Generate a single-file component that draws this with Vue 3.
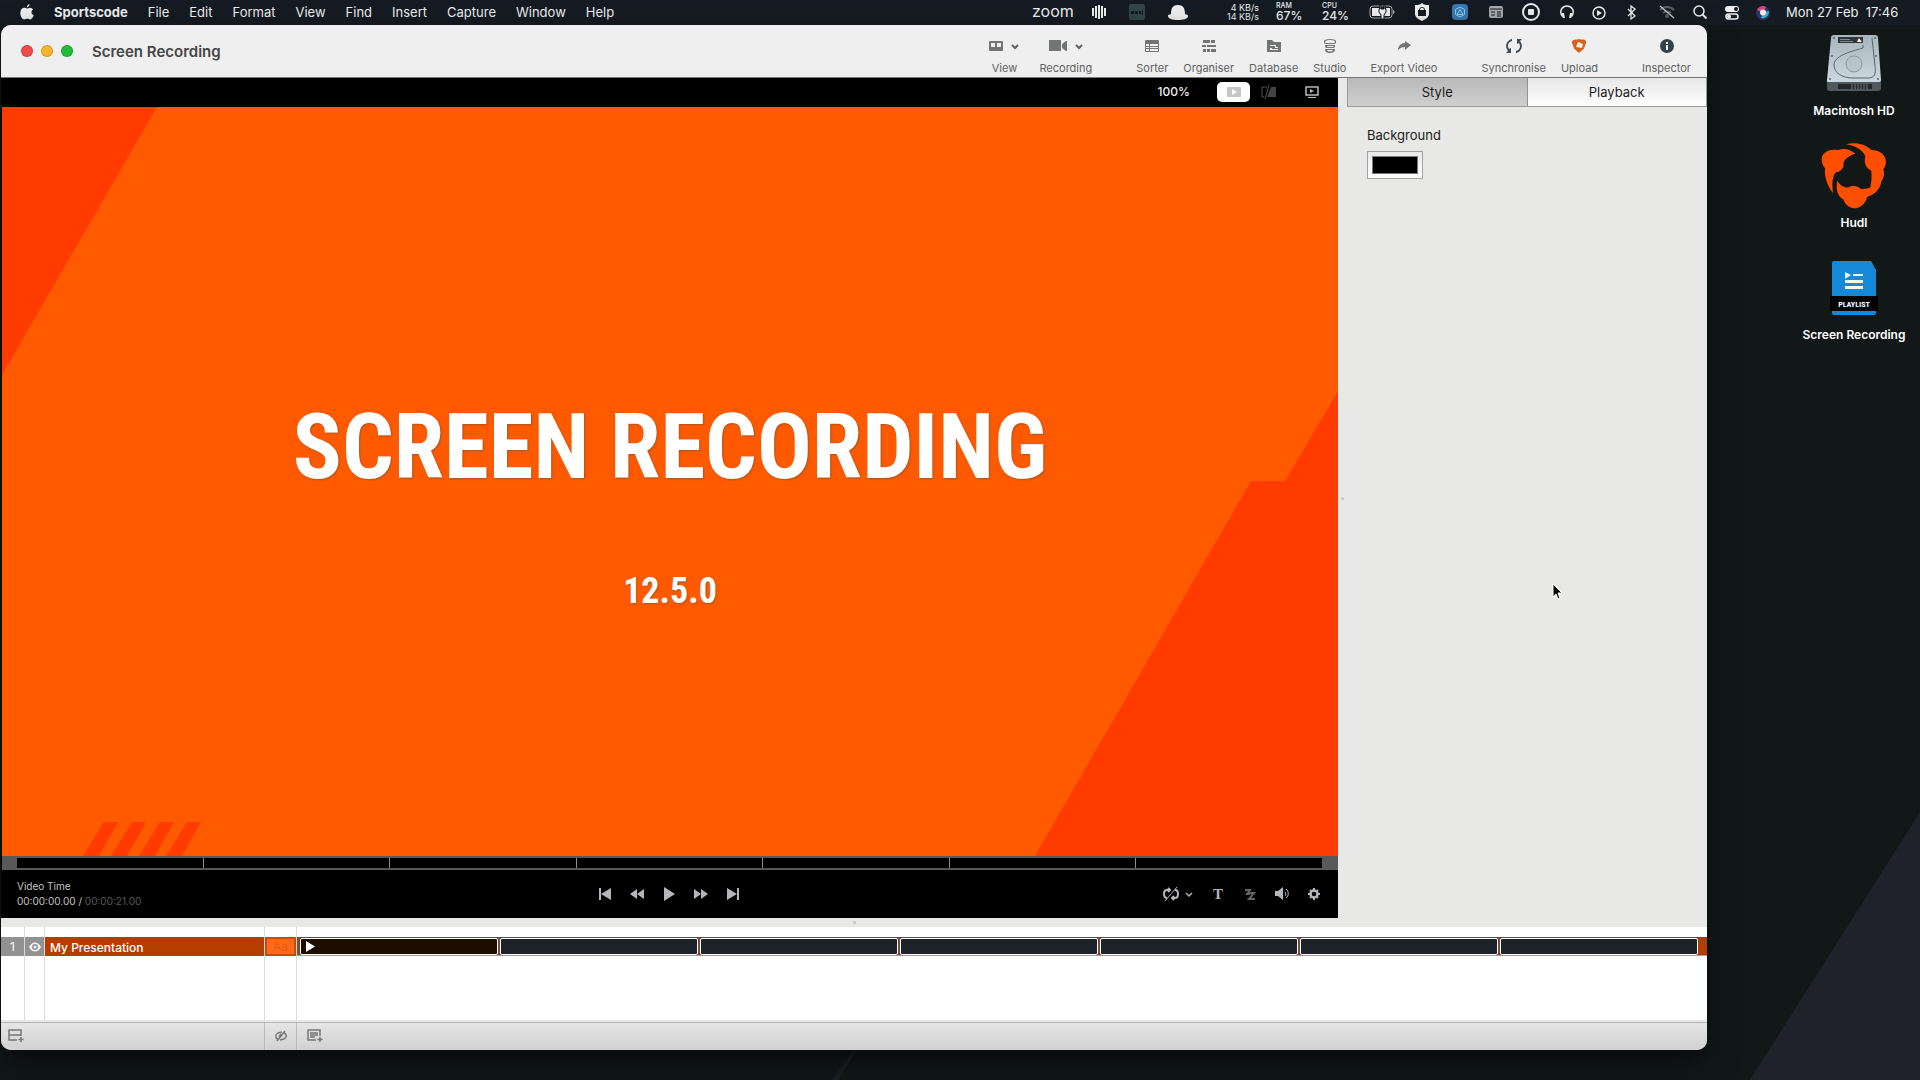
<template>
  <div class="desktop">
    <svg class="wallpaper" viewBox="0 0 1920 1080" preserveAspectRatio="none" aria-hidden="true">
      <path d="M1920 812 1750 1080H1920Z" fill="#1f222a" />
      <path d="M853 1050 832 1080H838L857 1050Z" fill="#1d1f26" />
    </svg>

    <header class="menubar">
      <nav class="menus" aria-label="Menu bar">
        <button class="menu apple" aria-label="Apple menu">
          <svg width="14" height="16" viewBox="0 0 14 16">
            <path fill="currentColor" d="M9.6 0c.1 1.600-1.100 3.300-2.800 3.500C6.700 2 8 .3 9.600 0ZM6.900 4.500c.7 0 1.600-.8 3-.8 1.300 0 2.500.7 3.200 1.800-2.400 1.400-2 4.800.6 5.800-.7 2-2 4.200-3.500 4.200-1.200 0-1.600-.7-3-.7s-1.900.7-3 .7C2.400 15.500.3 12.200.3 9 .3 5.700 2.300 3.800 4.300 3.800c1.200 0 2 .7 2.600.7Z" />
          </svg>
        </button>
        <button v-for="(menu, index) in menus" :key="menu" class="menu" :class="{ bold: index === 0 }">
          {{ menu }}
        </button>
      </nav>

      <div class="status">
        <span class="zoom">zoom</span>
        <svg width="14" height="20" viewBox="0 0 14 20"><path stroke="currentColor" stroke-width="2" d="M1 6v8M4 4v12M7 3v14M10 4v12M13 6v8" /></svg>
        <svg width="30" height="20" viewBox="0 0 30 20"><rect x="7" y="2" width="16" height="16" rx="2" fill="#36434a" /><path fill="#10181c" d="M9 9h3v3H9zM13 9h3v3h-3zM17 9h2v3h-2zM20 8h1v5h-1z" /></svg>
        <svg width="20" height="20" viewBox="0 0 20 20"><path fill="currentColor" d="M3 12C3 6 5 3 10 3s7 3 7 9c1 1 3 0 3 2 0 3-5 4-10 4S0 17 0 14c0-2 2-1 3-2Z" /></svg>
        <span class="net">4 KB/s<br>14 KB/s</span>
        <span class="meter ram"><small>RAM</small>67%</span>
        <span class="meter cpu"><small>CPU</small>24%</span>
        <svg width="28" height="20" viewBox="0 0 28 20">
          <rect x="2" y="4" width="22" height="12" rx="3" fill="none" stroke="#a5a9ab" />
          <path fill="currentColor" d="M4 6h7v3l1 3 2 2H4zM16 6h6v8h-7l2-2 1-3V6z" />
          <path fill="currentColor" stroke="#151b22" d="M12 3h1v4h3V3h1v4h1v3l-2 3v4h-3v-4l-2-3V7h1z" />
          <path fill="#a5a9ab" d="M25 8c2 0 2 4 0 4z" />
        </svg>
        <svg width="20" height="20" viewBox="0 0 20 20"><path fill="currentColor" fill-rule="evenodd" d="M10 1c2 2 4 2 7 2v9c0 3-3 5-7 7-4-2-7-4-7-7V3c3 0 5 0 7-2ZM7 8H6v6h8V8h-1C13 4 7 4 7 8Zm1 0c0-3 4-3 4 0Z" /></svg>
        <svg width="24" height="20" viewBox="0 0 24 20"><rect x="4" y="2" width="16" height="16" rx="4" fill="#3679ae" /><path fill="none" stroke="#8cc7f3" d="M12 5 16.500 7.500v5L12 15l-4.500-2.500v-5ZM12 7.500l-3 5h6Z" /></svg>
        <svg width="16" height="20" viewBox="0 0 16 20"><rect x="1" y="4" width="14" height="12" rx="2" fill="#a6a9ac" /><path stroke="#1a2026" d="M2 7h12M3 10h4M3 13h4M9 10h4M9 12h4M9 14h4" /></svg>
        <svg width="24" height="20" viewBox="0 0 24 20"><circle cx="11" cy="10" r="8" fill="none" stroke="currentColor" stroke-width="2" /><rect x="8" y="7" width="6" height="6" rx="1" fill="currentColor" /></svg>
        <svg width="16" height="20" viewBox="0 0 16 20"><path fill="none" stroke="currentColor" stroke-width="1.500" d="M2 14C-1 9 2 4 7 4s8 5 5 10" /><path fill="currentColor" d="M2 11h2l1 5H3l-2-3ZM12 11h-2l-1 5h2l2-3Z" /></svg>
        <svg width="14" height="20" viewBox="0 0 14 20"><circle cx="7" cy="11" r="6" fill="none" stroke="currentColor" stroke-width="1.500" /><path fill="currentColor" d="m5 8 5 3-5 3Z" /></svg>
        <svg width="20" height="20" viewBox="0 0 20 20"><path fill="none" stroke="currentColor" stroke-width="1.300" d="m6 7 7 7-4 3V4l4 3-7 7" /></svg>
        <svg width="18" height="20" viewBox="0 0 18 20"><path fill="none" stroke="#596066" stroke-width="2" d="M2 8c4-4 10-4 14 0M5 11c2-2 6-2 8 0" /><circle cx="9" cy="14" r="2" fill="#596066" /><path stroke="#c6c9cb" stroke-width="1.300" d="m2 4 14 12" /></svg>
        <svg width="16" height="20" viewBox="0 0 16 20"><circle cx="7" cy="9" r="5" fill="none" stroke="currentColor" stroke-width="1.500" /><path stroke="currentColor" stroke-width="2" d="m10.500 12.500 4 4" /></svg>
        <svg width="16" height="20" viewBox="0 0 16 20"><rect x="1" y="4" width="14" height="6" rx="3" fill="currentColor" /><circle cx="12" cy="7" r="2" fill="#12191c" /><rect x="2" y="12" width="12" height="5" rx="2.500" fill="none" stroke="currentColor" stroke-width="1.500" /><circle cx="5" cy="14.500" r="2" fill="currentColor" /></svg>
        <svg width="14" height="20" viewBox="0 0 14 20"><circle cx="7" cy="11" r="7" fill="#2b3265" /><path fill="#d84478" d="M1 8c2-4 7-5 9-3L7 11Z" /><path fill="#36b0c5" d="M13 9c0 6-5 8-8 7l2-6Z" /><circle cx="7" cy="10.500" r="3" fill="#f1eaf5" /></svg>
        <time class="clock">Mon 27 Feb&nbsp; 17:46</time>
      </div>
    </header>

    <div class="workspace">
      <main class="window">
        <div class="titlebar">
          <div class="lights">
            <button class="light red" aria-label="Close"></button>
            <button class="light amber" aria-label="Minimise"></button>
            <button class="light green" aria-label="Zoom"></button>
          </div>
          <h1 class="window-title">Screen Recording</h1>
          <div class="toolbar">
            <div v-for="(group, index) in toolGroups" :key="index" class="tool-group">
              <button v-for="tool in group" :key="tool.label" class="tool">
                <span class="tool-icon">
                  <svg :width="tool.width || 16" height="16" :viewBox="`0 0 ${tool.width || 16} 16`">
                    <path :fill="tool.color || '#737575'" fill-rule="evenodd" :d="tool.path" />
                  </svg>
                  <svg v-if="tool.menu" width="8" height="16" viewBox="0 0 8 16"><path fill="none" stroke="#626464" stroke-width="2" d="m1 7 3 3 3-3" /></svg>
                </span>
                {{ tool.label }}
              </button>
            </div>
          </div>
        </div>

        <div class="content">
          <section class="player">
            <div class="view-bar">
              <span class="scale">100%</span>
              <button class="view-button active" aria-label="Presentation view">
                <svg width="14" height="10" viewBox="0 0 14 10"><rect width="14" height="10" rx="1" fill="#c6c6c6" /><path fill="#fff" d="m5 2 5 3-5 3Z" /></svg>
              </button>
              <button class="view-button" aria-label="Hide drawings">
                <svg width="16" height="14" viewBox="0 0 16 14"><path fill="#444" d="M10 2h5v10H6Z" /><path fill="none" stroke="#555" d="M6 2H1v10h2M8 0 4 14" /></svg>
              </button>
              <button class="view-button" aria-label="Presenter display">
                <svg width="14" height="12" viewBox="0 0 14 12"><rect x="1" y="1" width="12" height="8" fill="none" stroke="#bbb" stroke-width="1.500" /><path fill="#bbb" d="m5 3 4 2-4 2ZM3 11h8v1H3Z" /></svg>
              </button>
            </div>

            <div class="slide">
              <svg class="slide-art" viewBox="0 0 1336 749" aria-hidden="true">
                <rect width="1336" height="749" fill="#ff5a00" />
                <path fill="#ff3b00" d="M0 0H155L0 268ZM1336 284 1283 374H1249L1033 749H1336ZM102 715h14l-19 34H81ZM130 715h14l-19 34h-16ZM158 715h14l-19 34h-16ZM185 715h14l-19 34h-16Z" />
              </svg>
              <div class="slide-text">
                <h2 class="slide-title">SCREEN RECORDING</h2>
                <p class="slide-version">12.5.0</p>
              </div>
            </div>

            <div class="scrubber">
              <span v-for="n in 7" :key="n" class="scrub-part"></span>
            </div>

            <div class="controls">
              <div class="time">
                <div>Video Time</div>
                <div>00:00:00.00 / <span class="total">00:00:21.00</span></div>
              </div>
              <div class="transport">
                <button v-for="control in transport" :key="control.label" :aria-label="control.label">
                  <svg width="14" height="14" viewBox="0 0 14 14"><path fill="#b4b7ba" :d="control.path" /></svg>
                </button>
              </div>
              <div class="options">
                <button class="loop" aria-label="Loop options">
                  <svg width="16" height="14" viewBox="0 0 16 14"><path fill="none" stroke="#b4b7ba" stroke-width="2" d="M4 11C0 11 0 3 4 3h3M5 1l2 2-2 2M12 3c4 0 4 8 0 8H9M11 9l-2 2 2 2" /><path stroke="#b4b7ba" d="M14 0 2 14" /></svg>
                  <svg width="8" height="14" viewBox="0 0 8 14"><path fill="none" stroke="#b4b7ba" stroke-width="1.500" d="m1 6 3 3 3-3" /></svg>
                </button>
                <button class="text-tool" aria-label="Text">T</button>
                <button aria-label="Transition">
                  <svg width="14" height="14" viewBox="0 0 14 14"><path fill="none" stroke="#626466" stroke-width="2" d="M2 3h5L4 7h3M6 6h5l-5 6h6" /></svg>
                </button>
                <button aria-label="Volume">
                  <svg width="14" height="14" viewBox="0 0 14 14"><path fill="#b4b7ba" d="M0 4h3l5-4v13L3 9H0Z" /><path fill="none" stroke="#b4b7ba" d="M10 5c1 1 1 3 0 4M11 2c3 2 3 7 0 9" /></svg>
                </button>
                <button aria-label="Settings">
                  <svg width="14" height="14" viewBox="0 0 14 14"><circle cx="7" cy="7" r="3.500" fill="none" stroke="#b4b7ba" stroke-width="2.500" /><path stroke="#b4b7ba" stroke-width="2" d="M7 1v2M7 11v2M1 7h2M11 7h2M3 3l1 1M10 10l1 1M11 3l-1 1M4 10l-1 1" /></svg>
                </button>
              </div>
            </div>
          </section>

          <div class="splitter"><span class="grip"></span></div>

          <aside class="inspector">
            <div class="tabs" role="tablist">
              <button
                v-for="tab in tabs"
                :key="tab"
                class="tab"
                :class="{ selected: tab === activeTab }"
                role="tab"
                :aria-selected="tab === activeTab"
                @click="activeTab = tab"
              >
                {{ tab }}
              </button>
            </div>
            <div class="field">
              <label for="background">Background</label>
              <input id="background" v-model="background" type="color" class="swatch">
            </div>
          </aside>
        </div>

        <div class="row-splitter"><span class="grip"></span></div>

        <section class="timeline">
          <div class="column"><span class="row-number">1</span></div>
          <div class="column">
            <button class="row-eye" aria-label="Toggle row">
              <svg width="12" height="10" viewBox="0 0 12 10"><path fill="#f4f4f4" fill-rule="evenodd" d="M0 5c3-6 9-6 12 0-3 6-9 6-12 0Zm6-3a3 3 0 1 0 0 6 3 3 0 0 0 0-6Z" /><circle cx="6" cy="5" r="1.500" fill="#f4f4f4" /></svg>
            </button>
          </div>
          <div class="column"><span class="row-name">My Presentation</span></div>
          <div class="column"><span class="row-label">Aa</span></div>
          <div class="column">
            <div class="clips">
              <button v-for="n in 7" :key="n" class="clip" :class="{ current: n === 1 }" :aria-label="`Clip ${n}`">
                <svg v-if="n === 1" width="9" height="11" viewBox="0 0 9 11"><path fill="#fff" d="m0 0 9 5.500L0 11Z" /></svg>
              </button>
            </div>
          </div>
        </section>

        <footer class="bottom-bar">
          <div class="bar-cell wide">
            <button aria-label="Add row">
              <svg width="16" height="14" viewBox="0 0 16 14"><path fill="none" stroke="#777" stroke-width="1.500" d="M9 11H1V1h12v6M1 6h12M13 8v5M10.500 10.500h5" /></svg>
            </button>
          </div>
          <div class="bar-cell centered">
            <button aria-label="Hide labels">
              <svg width="12" height="12" viewBox="0 0 12 12"><path fill="none" stroke="#777" stroke-width="1.500" d="M3 9C0 8 0 5 3 3l4-1M9 3c3 1 3 4 0 6l-4 1M4 7l2-3M10 1 2 11" /></svg>
            </button>
          </div>
          <div class="bar-cell">
            <button aria-label="Add clip">
              <svg width="16" height="14" viewBox="0 0 16 14"><path fill="none" stroke="#777" stroke-width="1.500" d="M9 11H1V1h12v6M13 8v5M10.500 10.500h5M3 4h8M3 6h8M3 8h5" /></svg>
            </button>
          </div>
        </footer>
      </main>

      <div class="desktop-items">
        <a href="#" class="desktop-item">
          <svg class="item-icon" width="66" height="66" viewBox="0 0 66 66">
            <defs>
              <linearGradient id="metal" x2="0" y2="1"><stop stop-color="#a9b5bc" /><stop offset="1" stop-color="#cbd8df" /></linearGradient>
            </defs>
            <path fill="#52595c" d="M6 50h54v7q0 3-3 3H9q-3 0-3-3Z" />
            <path fill="#23292b" d="M17 53h34v5H17Z" />
            <path stroke="#727a7d" d="M31 53v5M34 53v5M37 53v5M40 53v5M43 53v5M46 53v5" />
            <path fill="url(#metal)" d="M13 4h41q3 0 3 3l3 42q0 2-3 2H8q-3 0-2-2l4-42q0-3 3-3Z" />
            <path fill="#303638" d="M17 6h25v6H17Z" />
            <path fill="#7d878c" d="M19 8h10v1H19zM19 10h13v1H19z" />
            <path fill="#fff" d="m38 7 3 4h-5Z" />
            <path fill="none" stroke="#59656c" d="M42 14v3c-14 4-29 8-29 17 0 8 8 13 19 13h15c7 0 8-4 7-12L51 7" />
            <circle cx="33" cy="33" r="8" fill="#b7c4cb" stroke="#8b989f" />
            <g fill="#58646a"><circle cx="13" cy="7" r="1" /><circle cx="54" cy="7" r="1" /><circle cx="11" cy="25" r="1" /><circle cx="55" cy="25" r="1" /><circle cx="9" cy="48" r="1" /><circle cx="57" cy="48" r="1" /></g>
          </svg>
          Macintosh HD
        </a>
        <a href="#" class="desktop-item">
          <svg class="item-icon" width="66" height="66" viewBox="0 0 196 196">
            <g fill="#ff4e00">
              <path d="M102 32C88 18 67 14 50 21 29 16 3 26 2 47c0 11 3 21 10 28-3 27 8 54 24 74-3-24-4-44 6-60 15-5 25-11 25-26-1-13 15-25 35-31Z" />
              <path d="M74 4c27-8 57-2 76 17 22 0 42 13 43 34 0 9-3 17-8 23 9 26-12 52-42 65 6-18 9-43 6-61-15-7-23-24-17-42-8-19-29-32-58-36Z" />
              <path d="M48 112c10 14 18 20 33 20 12-7 29-5 38 5 25-1 45-8 60-24-2 23-18 40-42 47-5 20-20 34-39 34-16-2-26-12-32-27-18-9-22-32-18-55Z" />
            </g>
          </svg>
          Hudl
        </a>
        <a href="#" class="desktop-item">
          <svg class="item-icon" width="66" height="66" viewBox="0 0 66 66">
            <path fill="#1489d8" d="M13 6q-2 0-2 2v50q0 2 2 2h40q2 0 2-2V15l-5-9Z" />
            <path fill="#e7fbff" d="m24 17 6 3-6 4ZM32 19h10v2H32ZM24 25h18v3H24ZM24 31h18v3H24Z" />
            <path fill="#000" d="M9 41h48v15H9Z" />
            <text x="33" y="52" class="playlist-text">PLAYLIST</text>
          </svg>
          Screen Recording
        </a>
      </div>
    </div>

    <svg class="cursor" width="12" height="18" viewBox="0 0 12 18" aria-hidden="true"><path stroke="#fff" d="M1 1v13l3-3 2 5 2-1-2-5h4Z" /></svg>
  </div>
</template>

<script setup>
import { ref } from 'vue'

const menus = ['Sportscode', 'File', 'Edit', 'Format', 'View', 'Find', 'Insert', 'Capture', 'Window', 'Help']

const tabs = ['Style', 'Playback']
const activeTab = ref('Style')
const background = ref('#000000')

const toolGroups = [
  [
    { label: 'View', menu: true, width: 14, path: 'M1 3h12q1 0 1 1v8q0 1-1 1H1q-1 0-1-1V4q0-1 1-1Zm1 2v4h4V5Zm6 0v4h4V5Z' },
    { label: 'Recording', menu: true, width: 18, path: 'M0 2h12v11H0ZM13 6l4-3h1v10h-1l-4-3Z' }
  ],
  [
    { label: 'Sorter', width: 14, path: 'M1 2h12q1 0 1 1v10q0 1-1 1H1q-1 0-1-1V3q0-1 1-1Zm0 4v2h3V6Zm4 0v2h8V6ZM1 9v1h3V9Zm4 0v1h8V9Zm-4 2v2h3v-2Zm4 0v2h8v-2Z' },
    { label: 'Organiser', width: 14, path: 'M1 2h7v3H1ZM9 2h4v3H9ZM0 7h4v2H0ZM5 7h9v2H5ZM1 11h3v3H1ZM5 11h3v3H5ZM9 11h5v3H9Z' },
    { label: 'Database', width: 14, path: 'M0 2h5l2 2h7v10H0Zm3 5v1h5v2h3V9H9V7ZM3 10v2h8v-1H5v-1Z' },
    { label: 'Studio', width: 12, path: 'M6 1c8 0 8 5 3 5H3C-2 6-2 1 6 1Zm0 1C0 2 0 5 3 5h6c3 0 3-3-3-3ZM1 7h10c0 1 0 3-2 3H3C1 10 1 8 1 7Zm2 1c0 1 1 1 2 1h3c1 0 1 0 2-1ZM1 11h10c0 3-2 4-5 4s-5-1-5-4Zm2 1c1 2 5 2 6 0Z' }
  ],
  [
    { label: 'Export Video', width: 14, path: 'M8 3l6 4-6 5V9C5 9 3 10 1 12c0-4 3-7 7-7Z' }
  ],
  [
    { label: 'Synchronise', color: '#414c54', path: 'M6 1v2C2 4 1 8 3 11l2-1v5H0l2-2C-2 8 1 2 6 1ZM10 15v-2c4-1 5-5 3-8l-2 1V1h5l-2 2c4 5 1 11-4 12Z' },
    { label: 'Upload', color: '#d86119', width: 14, path: 'M7 1c2 1 4 0 6 1 2 2 1 4 0 5 0 3-2 5-4 6-1 2-3 2-4 0-2-1-4-3-4-6C-1 5 0 2 2 2c2-1 3 0 5-1ZM6 4 4 9l6 1 1-4Z' }
  ],
  [
    { label: 'Inspector', color: '#34424e', width: 14, path: 'M7 1a7 7 0 1 1 0 14A7 7 0 0 1 7 1ZM6 4v2h2V4ZM6 7v5h2V7Z' }
  ]
]

const transport = [
  { label: 'Previous', path: 'M1 1h2v12H1ZM13 1v12L3 7Z' },
  { label: 'Rewind', path: 'M7 2v10L0 7ZM14 2v10L7 7Z' },
  { label: 'Play', path: 'M2 0 13 7 2 14Z' },
  { label: 'Fast forward', path: 'M0 2l7 5-7 5ZM7 2l7 5-7 5Z' },
  { label: 'Next', path: 'M1 1l10 6-10 6ZM11 1h2v12h-2Z' }
]
</script>

<style>
body {
  margin: 0;
  background: #121818;
}
</style>

<style scoped>
.desktop {
  position: relative;
  display: flex;
  flex-direction: column;
  min-height: 100vh;
  overflow: hidden;
  background: #121818;
  font-family: Inter, "Liberation Sans", sans-serif;
}

.desktop *,
.desktop *::before {
  box-sizing: border-box;
}

button {
  padding: 0;
  border: 0;
  background: none;
  color: inherit;
  font: inherit;
}

svg {
  display: block;
  flex: none;
}

.wallpaper {
  position: absolute;
  inset: 0;
  width: 100%;
  height: 100%;
}

/* Menu bar */
.menubar {
  position: relative;
  display: flex;
  justify-content: space-between;
  align-items: center;
  height: 25px;
  padding: 0 19px 2px 20px;
  background: #151b22;
  color: #eceeef;
  font-size: 13px;
  white-space: nowrap;
}

.menus,
.status {
  display: flex;
  align-items: center;
  gap: 20px;
}

.status {
  gap: 16px;
}

.menu.bold {
  font-weight: 700;
}

.zoom {
  width: 48px;
  padding: 0 0 2px 4px;
  font-size: 16px;
  line-height: 18px;
}

.net {
  width: 56px;
  padding-right: 1px;
  font-size: 9px;
  line-height: 9px;
  text-align: right;
}

.meter {
  display: flex;
  flex-direction: column;
  font-size: 12px;
  font-weight: 500;
  line-height: 12px;
}

.meter small {
  font-size: 7px;
  line-height: 8px;
}

.ram {
  width: 26px;
}

.cpu {
  width: 34px;
  padding-left: 4px;
}

.clock {
  min-width: 115px;
}

/* Window */
.workspace {
  position: relative;
  display: flex;
  flex: 1;
  align-items: flex-start;
  padding: 0 0 30px 1px;
}

.window {
  flex: 1;
  min-width: 0;
  overflow: hidden;
  border-radius: 10px;
  background: #e8e8e6;
  box-shadow: 0 12px 30px rgba(0, 0, 0, 0.6);
}

.titlebar {
  display: flex;
  align-items: center;
  height: 53px;
  padding: 0 16px 0 20px;
  border-bottom: 1px solid #777;
  background: #eeefee;
}

.lights {
  display: flex;
  gap: 8px;
}

.light {
  width: 12px;
  height: 12px;
  border-radius: 50%;
  box-shadow: inset 0 0 0 1px rgba(0, 0, 0, 0.15);
}

.red {
  background: #f04c48;
}

.amber {
  background: #f8b42c;
}

.green {
  background: #21bd38;
}

.window-title {
  flex: 1;
  margin: 0 0 0 19px;
  color: #454646;
  font-size: 15px;
  font-weight: 600;
}

.toolbar {
  display: flex;
  gap: 24px;
  padding-top: 10px;
}

.tool-group {
  display: flex;
  gap: 15px;
  margin-left: 20px;
}

.tool-group:first-child {
  gap: 22px;
}

.tool-group:nth-child(3) {
  margin-left: 0;
}

.tool {
  display: flex;
  flex-direction: column;
  align-items: center;
  gap: 7px;
  color: #616262;
  font-size: 11px;
  line-height: 14px;
  white-space: nowrap;
}

.tool-icon {
  display: flex;
  gap: 8px;
  margin: 0 -2px;
}

.content {
  display: flex;
}

.player {
  flex: 1;
  min-width: 0;
  padding-left: 1px;
  background: #000;
  color: #c4c4c4;
}

.view-bar {
  display: flex;
  justify-content: flex-end;
  align-items: center;
  height: 29px;
  padding: 0 10px 2px 0;
}

.scale {
  margin-right: 27px;
  color: #eee;
  font-size: 12px;
  font-weight: 500;
}

.view-button {
  display: flex;
  justify-content: center;
  align-items: center;
  width: 33px;
  height: 20px;
  border-radius: 5px;
}

.view-button + .view-button {
  margin-left: 2px;
}

.view-button:last-child {
  margin-left: 10px;
}

.active {
  background: #fff;
}

.slide {
  display: grid;
}

.slide-art,
.slide-text {
  grid-area: 1 / 1;
}

.slide-art {
  width: 100%;
  height: auto;
}

.slide-text {
  display: flex;
  flex-direction: column;
  justify-content: center;
  align-items: center;
  gap: 80px;
  padding-top: 48px;
  color: #fff;
  font-family: "Roboto Condensed", "Liberation Sans Narrow", "Liberation Sans", sans-serif;
  font-weight: 700;
  text-shadow: 1px 1px 2px rgba(110, 80, 50, 0.6);
}

.slide-title {
  margin: 0;
  font-size: 91px;
  line-height: 91px;
}

.slide-version {
  margin: 0;
  font-size: 36px;
  line-height: 36px;
}

.scrubber {
  display: flex;
  height: 14px;
  padding: 2px 0;
  border-right: 16px solid #595959;
  border-left: 15px solid #595959;
  background: linear-gradient(#595959 2px, #000 2px 12px, #595959 12px);
}

.scrub-part {
  flex: 1;
}

.scrub-part + .scrub-part {
  border-left: 1px solid #8d8d8d;
}

.controls {
  display: grid;
  grid-template-columns: 1fr auto 1fr;
  align-items: center;
  height: 48px;
  padding: 0 17px 0 15px;
}

.time {
  font-size: 10px;
  line-height: 15px;
}

.total {
  color: #595959;
}

.transport {
  display: flex;
  gap: 18px;
}

.options {
  display: flex;
  justify-content: flex-end;
  align-items: center;
  gap: 18px;
}

.loop {
  display: flex;
  gap: 6px;
}

.text-tool {
  width: 14px;
  color: #b4b7ba;
  font-family: "Liberation Serif", serif;
  font-size: 15px;
  font-weight: 700;
}

.splitter,
.row-splitter {
  display: flex;
  justify-content: center;
  align-items: center;
}

.splitter {
  width: 9px;
}

.row-splitter {
  height: 9px;
}

.grip {
  width: 3px;
  height: 3px;
  border-radius: 50%;
  background: #c4c4c2;
}

.inspector {
  width: 360px;
}

.tabs {
  display: flex;
  height: 29px;
  border: solid #9c9c9c;
  border-width: 0 1px 1px;
}

.tab {
  flex: 1;
  background: linear-gradient(#e7e7e7, #fff);
  color: #1c1c1c;
  font-size: 13px;
}

.tab.selected {
  border-right: 1px solid #929292;
  background: linear-gradient(#b8b8b8, #d0d0d0);
}

.field {
  display: flex;
  flex-direction: column;
  gap: 7px;
  padding: 19px 20px;
  color: #202020;
  font-size: 13px;
  line-height: 18px;
}

.swatch {
  width: 56px;
  height: 28px;
  padding: 4px;
  border: 1px solid #a2a2a2;
  border-radius: 0;
  background: linear-gradient(#eaeaea, #fff);
}

.swatch::-webkit-color-swatch-wrapper {
  padding: 0;
}

.swatch::-webkit-color-swatch {
  border: 1px solid #777;
  border-radius: 0;
}

/* Timeline */
.timeline {
  display: grid;
  grid-template-columns: 24px 20px 220px 32px 1fr;
  height: 93px;
  background: #fff;
}

.column {
  padding-top: 10px;
  border-right: 1px solid #dadada;
}

.column:last-child {
  border-right: 0;
}

.column > * {
  display: flex;
  align-items: center;
  width: 100%;
  height: 19px;
  font-size: 12px;
}

.row-number,
.row-eye {
  justify-content: center;
  background: #929292;
  color: #fff;
}

.row-name {
  padding: 1px 0 0 5px;
  background: #b43e00;
  color: #fff;
  font-weight: 500;
}

.row-label {
  justify-content: center;
  border: 2px solid #c94b06;
  background: #ff6a1a;
  color: #e75b10;
}

.clips {
  gap: 2px;
  padding: 0 9px 0 3px;
  border-top: 1px solid #53514f;
  border-bottom: 1px solid #a39b96;
  background: #8a4a28;
  background: linear-gradient(to left, #b43e00 9px, #7c4c38 9px);
}

.clip {
  flex: 1;
  height: 17px;
  padding-left: 5px;
  border: 1px solid #fff;
  border-radius: 2px;
  background: #1d2228;
}

.current {
  background: #1d0d00;
}

/* Bottom bar */
.bottom-bar {
  display: grid;
  grid-template-columns: 264px 32px 1fr;
  height: 30px;
  padding-top: 2px;
  background: linear-gradient(#e8e8e8, #d0d1d0);
}

.bar-cell {
  display: flex;
  align-items: center;
  padding: 0 0 1px 10px;
  border-top: 1px solid #b4b4b4;
  border-right: 1px solid #b9b9b9;
}

.bar-cell:last-child {
  border-right: 0;
}

.wide {
  padding-left: 7px;
}

.centered {
  justify-content: center;
  padding-left: 0;
}

/* Desktop icons */
.desktop-items {
  display: flex;
  flex-direction: column;
  align-items: center;
  gap: 24px;
  width: 213px;
  padding: 6px 0 0 81px;
}

.desktop-item {
  display: flex;
  flex-direction: column;
  align-items: center;
  gap: 6px;
  color: #fff;
  font-size: 12px;
  font-weight: 600;
  line-height: 16px;
  text-decoration: none;
  white-space: nowrap;
}

.playlist-text {
  fill: #fff;
  font-family: "Roboto Condensed", "Liberation Sans Narrow", "Liberation Sans", sans-serif;
  font-size: 8px;
  font-weight: 700;
  text-anchor: middle;
}

.cursor {
  position: absolute;
  top: 583px;
  left: 1552px;
}
</style>
